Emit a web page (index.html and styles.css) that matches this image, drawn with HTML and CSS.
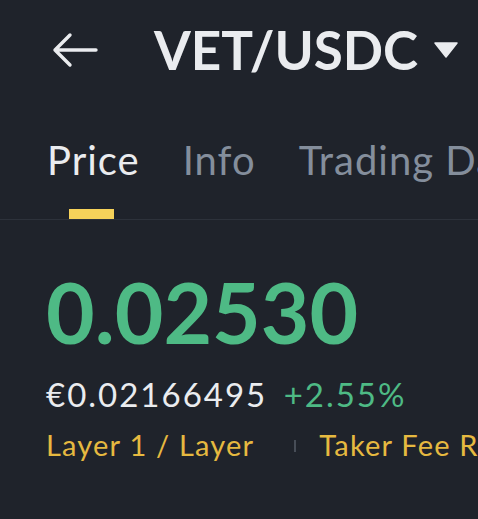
FILE: index.html
```html
<!DOCTYPE html>
<html lang="en">
<head>
  <meta charset="UTF-8" />
  <title>VET/USDC</title>
  <link rel="stylesheet" href="styles.css">
</head>
<body>
  <header class="topbar">
    <svg class="back" width="46" height="36" viewBox="0 0 46 36">
      <path d="M3 18 H44 M18 3 L3 18 L18 33" fill="none" stroke="#eaecef" stroke-width="3.4" stroke-linecap="round" stroke-linejoin="round"/>
    </svg>
    <h1 class="pair">VET/USDC</h1>
    <svg class="caret" width="24" height="16" viewBox="0 0 24 16">
      <path d="M1 1 H23 L12 15 Z" fill="#eaecef" stroke="#eaecef" stroke-width="1.5" stroke-linejoin="round"/>
    </svg>
  </header>

  <nav class="tabs">
    <a class="tab active">Price</a>
    <a class="tab">Info</a>
    <a class="tab">Trading Data</a>
  </nav>

  <div class="container">
    <div class="last">0.02530</div>
    <div class="sub">
      <span class="fiat">€0.02166495</span>
      <span class="change">+2.55%</span>
    </div>
    <div class="tags">
      <span class="tag">Layer 1 / Layer</span>
      <span class="sep"></span>
      <span class="tag">Taker Fee Rate</span>
    </div>
  </div>
</body>
</html>
```

FILE: styles.css
```css
body {
  margin: 0;
  background: #1f232b;
  font-family: Lato, "Open Sans", sans-serif;
  color: #eaecef;
  overflow: hidden;
  width: 478px;
  height: 519px;
}
.topbar {
  display: flex;
  align-items: center;
  height: 100px;
  padding-left: 52px;
}
.back {
  margin-right: 56px;
  flex-shrink: 0;
}
.pair {
  margin: 0;
  font-size: 53px;
  font-weight: 700;
  white-space: nowrap;
  line-height: 1.2;
}
.caret {
  margin-left: 16px;
  flex-shrink: 0;
}
.tabs {
  display: flex;
  gap: 43px;
  padding: 0 0 0 47px;
  margin-top: 36px;
  border-bottom: 1px solid #2d323b;
  white-space: nowrap;
}
.tab {
  position: relative;
  font-size: 40px;
  letter-spacing: 1px;
  color: #848e9c;
  padding-bottom: 35px;
  line-height: 1.2;
}
.tab.active {
  color: #eaecef;
}
.tab.active::after {
  content: "";
  position: absolute;
  left: 22px;
  bottom: 0;
  width: 45px;
  height: 10px;
  background: #f6d25a;
}
.container {
  padding: 42px 0 0 46px;
  white-space: nowrap;
}
.last {
  font-size: 84px;
  font-weight: 700;
  color: #4eba85;
  line-height: 1.2;
}
.sub {
  margin-top: 12px;
  font-size: 33px;
  letter-spacing: 2px;
  line-height: 1.2;
}
.fiat {
  color: #eaecef;
}
.change {
  color: #4eba85;
  margin-left: 6px;
}
.tags {
  display: flex;
  align-items: center;
  margin-top: 14px;
  font-size: 29px;
  line-height: 1.2;
  letter-spacing: 1.2px;
  color: #e6b940;
}
.sep {
  width: 2px;
  height: 12px;
  background: #474d57;
  margin: 0 23px 0 40px;
  flex-shrink: 0;
}
```
